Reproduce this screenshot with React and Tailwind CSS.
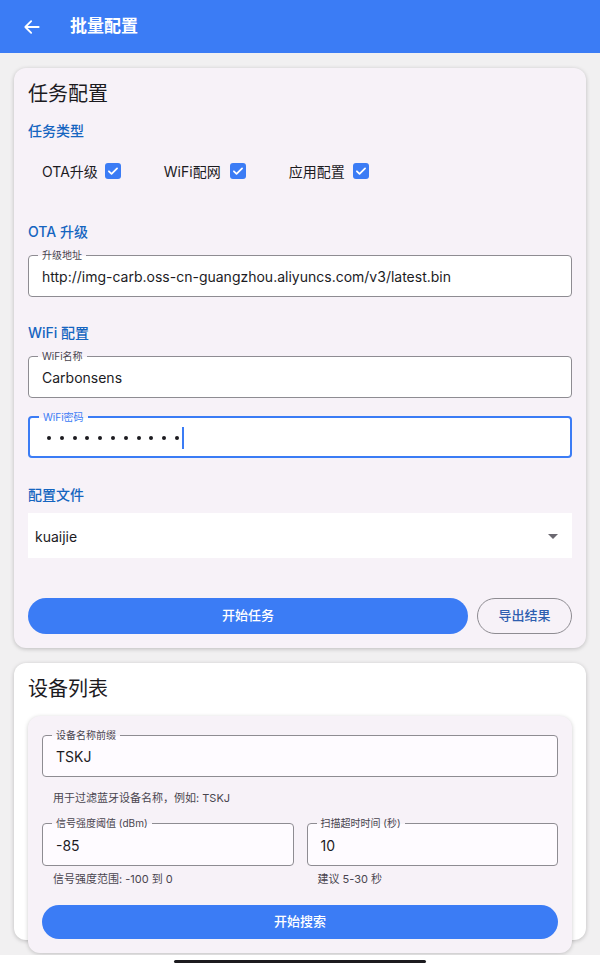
import React from "react";

const font = { fontFamily: "Inter, 'Noto Sans CJK SC', sans-serif" };

function Check() {
  return (
    <span className="flex h-[16px] w-[16px] items-center justify-center rounded-[3px] bg-[#3b7cf5]">
      <svg viewBox="0 0 24 24" className="h-[14px] w-[14px]" fill="none" stroke="white" strokeWidth="3" strokeLinecap="round" strokeLinejoin="round">
        <path d="M5 12.5l4.5 4.5L19 7.5" />
      </svg>
    </span>
  );
}

function Field({ label, value, focused, h = "h-[42px]", outer = "#f7f2f8", fill = "#ffffff", children }) {
  return (
    <div
      className={`relative flex ${h} items-center rounded-[4px] px-[13px] pt-[1px] ${
        focused ? "border-2 border-[#3b7cf5] px-[12px]" : "border border-[#8e8c92]"
      }`}
      style={{ background: fill }}
    >
      <span
        className={`absolute left-[9px] top-[-8px] px-[4px] text-[10px] leading-[14px] ${
          focused ? "text-[#3b7cf5]" : "text-[#49454f]"
        }`}
        style={{ background: `linear-gradient(to bottom, ${outer} 55%, ${fill} 55%)` }}
      >
        {label}
      </span>
      {children || <span className="text-[14px] text-[#1c1b1f]">{value}</span>}
    </div>
  );
}

function SectionTitle({ children }) {
  return <div className="text-[14px] font-medium leading-[22px] text-[#1565c0]">{children}</div>;
}

export default function App() {
  return (
    <div className="flex h-[968px] w-[600px] flex-col overflow-hidden bg-[#f1f0f1]" style={font}>
      {/* app bar */}
      <div className="flex h-[53px] shrink-0 items-center bg-[#3b7cf5] px-[22px]">
        <svg viewBox="0 0 24 24" className="h-[20px] w-[20px]" fill="none" stroke="white" strokeWidth="2.2" strokeLinecap="round" strokeLinejoin="round">
          <path d="M20 12H5M11 5l-7 7 7 7" />
        </svg>
        <span className="ml-[28px] text-[17px] font-bold text-white">批量配置</span>
      </div>

      <div className="flex-1 px-[14px] pt-[15px]">
        {/* task config card */}
        <div className="rounded-[12px] bg-[#f7f2f8] px-[14px] pb-[14px] pt-[12px] shadow-[0_1px_4px_rgba(0,0,0,0.22)]">
          <div className="text-[20px] leading-[28px] text-[#1c1b1f]">任务配置</div>
          <div className="mt-[12px]">
            <SectionTitle>任务类型</SectionTitle>
          </div>
          <div className="mt-[9px] flex h-[40px] items-center pl-[14px] text-[14px] text-[#1c1b1f]">
            <span>OTA升级</span>
            <span className="ml-[7px]"><Check /></span>
            <span className="ml-[43px]">WiFi配网</span>
            <span className="ml-[9px]"><Check /></span>
            <span className="ml-[43px]">应用配置</span>
            <span className="ml-[8px]"><Check /></span>
          </div>

          <div className="mt-[30px]">
            <SectionTitle>OTA 升级</SectionTitle>
          </div>
          <div className="mt-[12px]">
            <Field label="升级地址" value="http://img-carb.oss-cn-guangzhou.aliyuncs.com/v3/latest.bin" />
          </div>

          <div className="mt-[25px]">
            <SectionTitle>WiFi 配置</SectionTitle>
          </div>
          <div className="mt-[12px]">
            <Field label="WiFi名称" value="Carbonsens" />
          </div>
          <div className="mt-[18px]">
            <Field label="WiFi密码" focused>
              <span className="flex items-center gap-[8.8px] pl-[4px]">
                {Array.from({ length: 11 }).map((_, i) => (
                  <span key={i} className="h-[4px] w-[4px] rounded-full bg-[#1c1b1f]" />
                ))}
                <span className="-ml-[6px] h-[22px] w-[2px] bg-[#3b7cf5]" />
              </span>
            </Field>
          </div>

          <div className="mt-[26px]">
            <SectionTitle>配置文件</SectionTitle>
          </div>
          <div className="mt-[7px] flex h-[45px] items-center justify-between bg-white pl-[7px] pr-[14px] pt-[1px]">
            <span className="text-[14px] text-[#1c1b1f]">kuaijie</span>
            <svg viewBox="0 0 10 5" className="h-[5px] w-[10px]">
              <path d="M0 0h10L5 5z" fill="#6b6870" />
            </svg>
          </div>

          <div className="mt-[40px] flex gap-[9px]">
            <button className="h-[36px] flex-1 rounded-full bg-[#3b7cf5] text-[13px] font-medium text-white">开始任务</button>
            <button className="h-[36px] w-[95px] rounded-full border border-[#8e8c92] text-[13px] font-medium text-[#2f5fb0]">导出结果</button>
          </div>
        </div>

        {/* device list card */}
        <div className="mt-[15px] h-[277px] rounded-[12px] bg-white px-[14px] pt-[12px] shadow-[0_1px_4px_rgba(0,0,0,0.22)]">
          <div className="text-[20px] leading-[28px] text-[#1c1b1f]">设备列表</div>
          <div className="mt-[13px] rounded-[12px] bg-[#f7f2f8] px-[14px] pb-[14px] pt-[19px] shadow-[0_1px_4px_rgba(0,0,0,0.2)]">
            <Field label="设备名称前缀" value="TSKJ" fill="#fefbff" />
            <div className="mt-[13px] pl-[11px] text-[11px] leading-[16px] text-[#49454f]">用于过滤蓝牙设备名称，例如: TSKJ</div>
            <div className="mt-[17px] flex gap-[13px]">
              <div className="flex-1">
                <Field label="信号强度阈值 (dBm)" value="-85" h="h-[43px]" fill="#fefbff" />
                <div className="mt-[5px] pl-[11px] text-[11px] leading-[16px] text-[#49454f]">信号强度范围: -100 到 0</div>
              </div>
              <div className="flex-1">
                <Field label="扫描超时时间 (秒)" value="10" h="h-[43px]" fill="#fefbff" />
                <div className="mt-[5px] pl-[11px] text-[11px] leading-[16px] text-[#49454f]">建议 5-30 秒</div>
              </div>
            </div>
            <button className="mt-[18px] h-[34px] w-full rounded-full bg-[#3b7cf5] text-[13px] font-medium text-white">开始搜索</button>
          </div>
        </div>
      </div>

      {/* system nav bar */}
      <div className="relative z-10 flex h-[13px] shrink-0 items-start justify-center bg-white pt-[5px]">
        <div className="h-[3px] w-[252px] rounded-full bg-[#1c1b1f]" />
      </div>
    </div>
  );
}
